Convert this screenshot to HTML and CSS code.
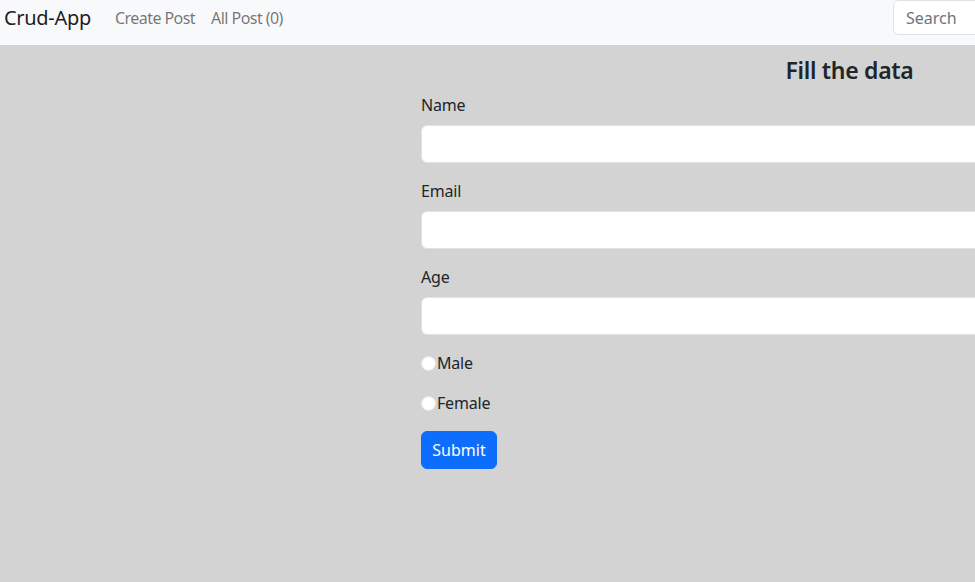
FILE: index.html
```html
<!DOCTYPE html>
<html lang="en">
<head>
<meta charset="utf-8">
<title>Crud-App</title>
<link rel="stylesheet" href="styles.css">
</head>
<body>
<nav class="navbar">
  <a class="brand" href="#">Crud-App</a>
  <a class="nav-link" href="#">Create Post</a>
  <a class="nav-link" href="#">All Post (0)</a>
  <input class="search" type="search" placeholder="Search">
</nav>
<main class="page">
  <form class="form">
    <h3 class="title">Fill the data</h3>
    <div class="field">
      <label class="label">Name</label>
      <input class="control" type="text">
    </div>
    <div class="field">
      <label class="label">Email</label>
      <input class="control" type="email">
    </div>
    <div class="field">
      <label class="label">Age</label>
      <input class="control" type="text">
    </div>
    <div class="radio-row">
      <input class="radio" type="radio" name="gender" id="male"><label for="male">Male</label>
    </div>
    <div class="radio-row">
      <input class="radio" type="radio" name="gender" id="female"><label for="female">Female</label>
    </div>
    <button class="btn" type="button">Submit</button>
  </form>
</main>
</body>
</html>
```

FILE: styles.css
```css
html, body {
  margin: 0;
  padding: 0;
}
body {
  background: #d3d3d3;
  font-family: "Noto Sans", "Open Sans", sans-serif;
  font-size: 16px;
  line-height: 24px;
  color: #212529;
  overflow: hidden;
  height: 582px;
}
.navbar {
  display: flex;
  align-items: flex-start;
  height: 45px;
  background: #f8f9fa;
  padding-left: 4px;
  box-sizing: border-box;
  width: 1093px;
  white-space: nowrap;
}
.brand {
  flex-shrink: 0;
  font-size: 20px;
  line-height: 36px;
  color: rgba(0, 0, 0, 0.9);
  text-decoration: none;
  margin-right: 16px;
  letter-spacing: -0.3px;
}
.nav-link {
  flex-shrink: 0;
  font-size: 16px;
  line-height: 36px;
  padding: 0 8px;
  color: rgba(0, 0, 0, 0.55);
  text-decoration: none;
  letter-spacing: -0.55px;
}
.search {
  flex-shrink: 0;
  margin-left: auto;
  width: 200px;
  height: 35px;
  box-sizing: border-box;
  border: 1px solid #dee2e6;
  border-radius: 6px;
  background: #fff;
  padding: 0 12px;
  font-family: inherit;
  font-size: 16px;
  color: #212529;
  outline: none;
}
.search::placeholder {
  color: #6c757d;
}
.page {
  padding-left: 421px;
  width: 1400px;
}
.form {
  width: 857px;
  margin: 0;
}
.title {
  text-align: center;
  font-size: 23px;
  line-height: 29px;
  font-weight: 600;
  margin: 11px 0 8px;
  letter-spacing: -0.3px;
}
.field {
  margin-bottom: 16px;
}
.label {
  display: block;
  margin-bottom: 8px;
  letter-spacing: -0.2px;
}
.control {
  display: block;
  width: 100%;
  height: 38px;
  box-sizing: border-box;
  border: 1px solid #dee2e6;
  border-radius: 6px;
  background: #fff;
  margin: 0;
  font-family: inherit;
  font-size: 16px;
}
.radio-row {
  display: flex;
  align-items: center;
  margin-bottom: 16px;
  letter-spacing: -0.2px;
}
.radio {
  appearance: none;
  -webkit-appearance: none;
  width: 15px;
  height: 15px;
  margin: 0 1px 0 0;
  border-radius: 50%;
  background: #fff;
  border: 1px solid #e6e6e6;
  box-sizing: border-box;
}
.btn {
  display: block;
  width: 76px;
  height: 38px;
  background: #0d6efd;
  color: #fff;
  border: 1px solid #0d6efd;
  border-radius: 6px;
  font-family: inherit;
  font-size: 16px;
  padding: 0;
}
```
